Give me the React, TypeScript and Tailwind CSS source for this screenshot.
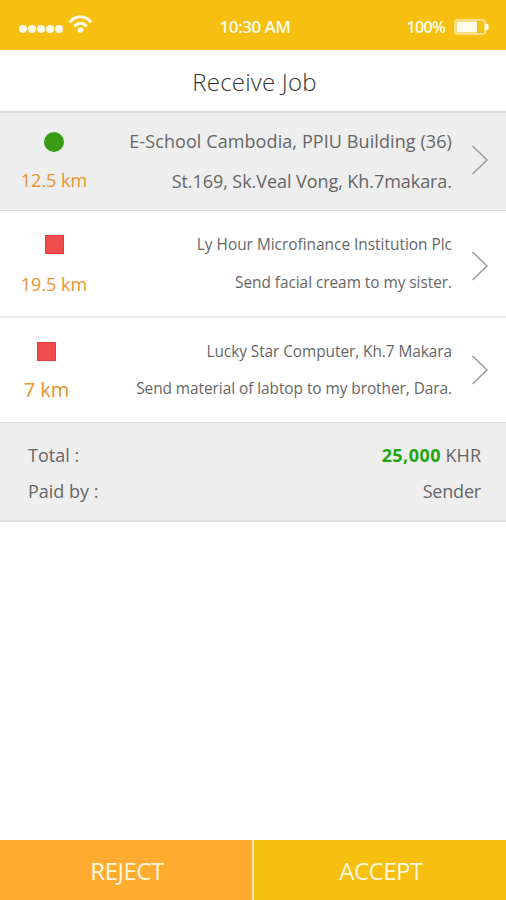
import { ReactNode } from "react";

const font = "font-['Open_Sans','Noto_Sans',sans-serif]";

function Chevron({ className }: { className: string }) {
  return (
    <svg className={className} width="18" height="30" viewBox="0 0 18 30" fill="none" stroke="#9b9b9b" strokeWidth="1.5">
      <path d="M1.5 1 L16 15 L1.5 29" />
    </svg>
  );
}

function Wifi() {
  return (
    <svg className="mt-[14px] ml-[5px]" width="25" height="20" viewBox="0 0 25 20" fill="none" stroke="#fffbea" strokeWidth="3">
      <path d="M1.8 8.4 C7.5 0.8 17.5 0.8 23.2 8.4" />
      <path d="M6.4 12.6 C9.4 8.2 15.6 8.2 18.6 12.6" />
      <circle cx="12.5" cy="16" r="2.8" fill="#fffbea" stroke="none" />
    </svg>
  );
}

function Line({ className, children }: { className: string; children: ReactNode }) {
  return <div className={`whitespace-nowrap leading-6 h-6 ${className}`}>{children}</div>;
}

export default function App() {
  return (
    <div className={`flex h-[900px] w-[506px] flex-col overflow-hidden bg-white text-[#666] ${font}`}>
      <header className="flex h-[50px] shrink-0 bg-[#f7c010] text-[#fffbea]">
        <div className="flex w-[170px] pl-[19px]">
          <div className="mt-[25px] flex gap-px">
            <i className="size-2 rounded-full bg-[#fffbea]" />
            <i className="size-2 rounded-full bg-[#fffbea]" />
            <i className="size-2 rounded-full bg-[#fffbea]" />
            <i className="size-2 rounded-full bg-[#fffbea]" />
            <i className="size-2 rounded-full bg-[#fffbea]" />
          </div>
          <Wifi />
        </div>
        <Line className="mt-[15px] w-[170px] text-center text-[17px] font-semibold tracking-[-0.5px]">10:30 AM</Line>
        <div className="flex flex-1 justify-end pr-[17px]">
          <Line className="mt-[15px] text-[16px] font-semibold tracking-[-0.7px]">100%</Line>
          <svg className="mt-[19px] ml-[9px]" width="35" height="16" viewBox="0 0 35 16">
            <rect x="1" y="1" width="30" height="14" rx="2" fill="none" stroke="#fde9a6" strokeWidth="1.5" />
            <rect x="2.5" y="2.5" width="20.5" height="11" fill="#fffbea" />
            <path d="M31 3.5 L34.5 6 V10 L31 12.5 Z" fill="#fffbea" />
          </svg>
        </div>
      </header>

      <h1 className="h-[63px] shrink-0 border-b-2 border-[#d8d8d8] pt-px pl-[3px] text-center text-[24px] leading-[62px] font-light tracking-[0.2px] text-[#333]">
        Receive Job
      </h1>

      <section className="flex h-[98px] shrink-0 border-b border-[#dadada] bg-[#eee]">
        <div className="flex w-[108px] flex-col items-center">
          <span className="mt-[19px] size-5 rounded-full bg-[#379c11]" />
          <Line className="mt-4 text-[18px] text-[#e8952f]">12.5 km</Line>
        </div>
        <div className="flex flex-1 flex-col items-end">
          <Line className="mt-[16px] text-[18px] tracking-[0.09px]">E-School Cambodia, PPIU Building (36)</Line>
          <Line className="mt-4 text-[18px] tracking-[-0.06px]">St.169, Sk.Veal Vong, Kh.7makara.</Line>
        </div>
        <Chevron className="mt-[32px] mr-[17px] ml-[19px]" />
      </section>

      <section className="flex h-[107px] shrink-0 border-b-2 border-[#ececec]">
        <div className="flex w-[108px] flex-col items-center">
          <span className="mt-[24px] size-[19px] border border-[#e83a3a] bg-[#ef4c4c]" />
          <Line className="mt-[18px] text-[18px] text-[#e8952f]">19.5 km</Line>
        </div>
        <div className="flex flex-1 flex-col items-end">
          <Line className="mt-[22px] text-[15.4px]">Ly Hour Microfinance Institution Plc</Line>
          <Line className="mt-[14px] text-[15.4px] tracking-[-0.04px]">Send facial cream to my sister.</Line>
        </div>
        <Chevron className="mt-[40px] mr-[17px] ml-[19px]" />
      </section>

      <section className="flex h-[104px] shrink-0">
        <div className="flex w-[93px] flex-col items-center">
          <span className="mt-[24px] size-[19px] border border-[#e83a3a] bg-[#ef4c4c]" />
          <Line className="mt-[17px] text-[20px] text-[#e8952f]">7 km</Line>
        </div>
        <div className="flex flex-1 flex-col items-end">
          <Line className="mt-[22px] text-[15.4px] tracking-[-0.06px]">Lucky Star Computer, Kh.7 Makara</Line>
          <Line className="mt-[13px] text-[15.4px] tracking-[-0.05px]">Send material of labtop to my brother, Dara.</Line>
        </div>
        <Chevron className="mt-[37px] mr-[17px] ml-[19px]" />
      </section>

      <section className="h-[100px] shrink-0 border-t border-b-2 border-[#dedede] bg-[#eee] pr-[25px] pl-[28px] text-[18px]">
        <div className="mt-5 flex justify-between">
          <Line className="">Total :</Line>
          <Line className=""><b className="font-bold tracking-[0.45px] text-[#1fa50d]">25,000</b> KHR</Line>
        </div>
        <div className="mt-3 flex justify-between">
          <Line className="">Paid by :</Line>
          <Line className="tracking-[-0.2px]">Sender</Line>
        </div>
      </section>

      <footer className="mt-auto flex h-[60px] shrink-0 gap-[2px] bg-[#fee7bd] text-center text-[24px] leading-[62px] font-medium text-[#fff6dc]">
        <button className="w-[252px] bg-[#ffac30] pb-px pl-0.5 tracking-[-0.5px]">REJECT</button>
        <button className="flex-1 bg-[#f7c010] pb-px pl-0.5 tracking-[-0.5px]">ACCEPT</button>
      </footer>
    </div>
  );
}
